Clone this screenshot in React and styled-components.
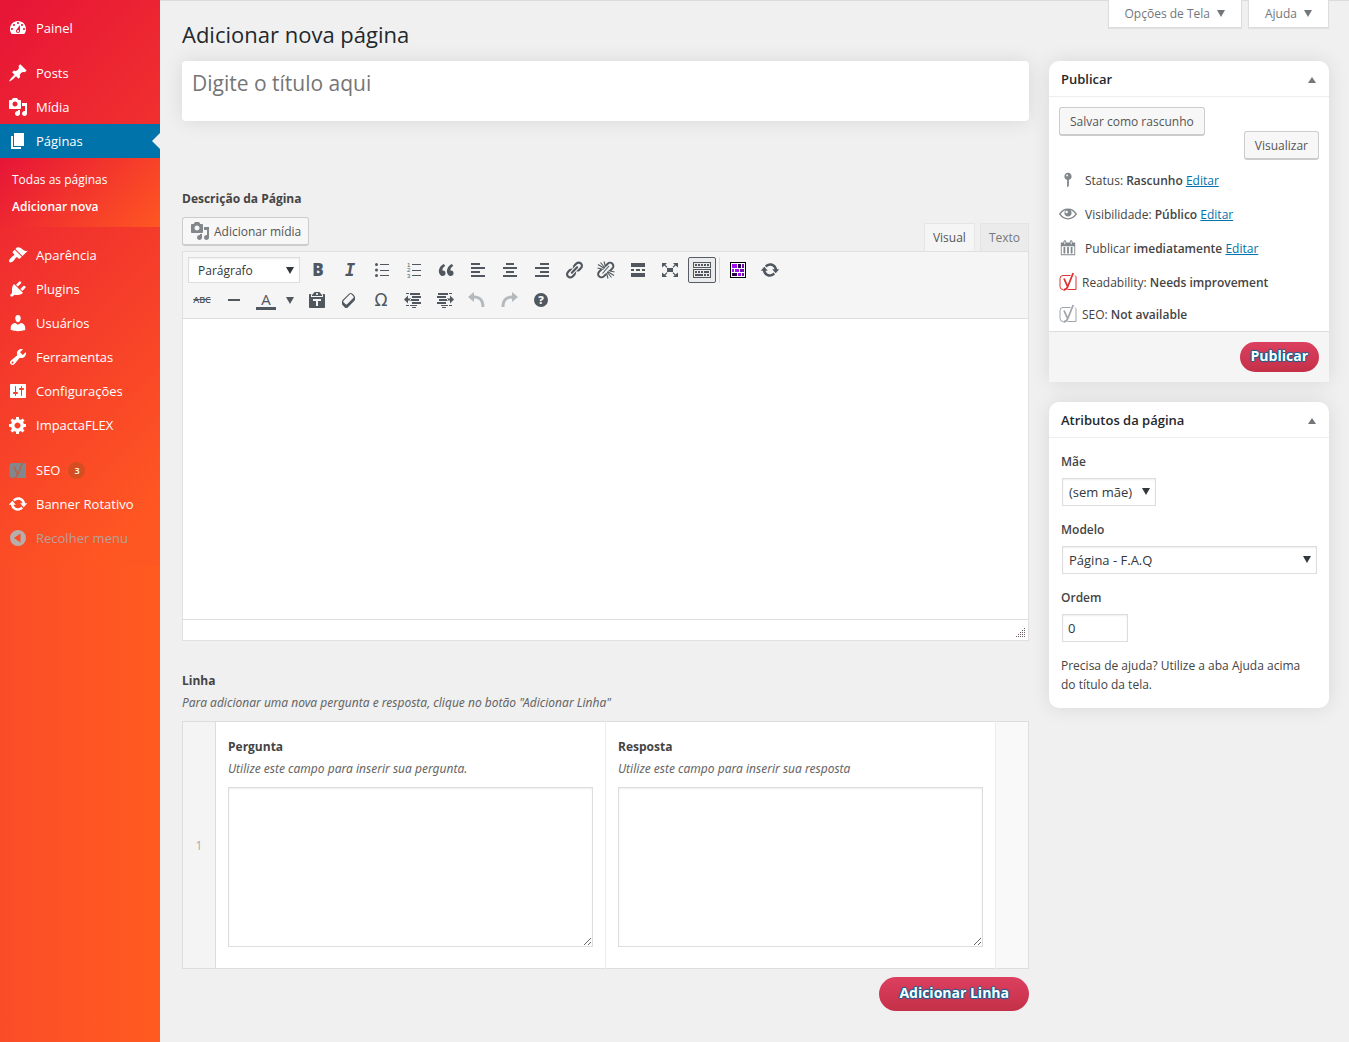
import React from "react";
import styled, { createGlobalStyle } from "styled-components";

const GlobalStyle = createGlobalStyle`
  *, *::before, *::after { box-sizing: border-box; }
  body {
    margin: 0;
    background: #f0f0f0;
    color: #444;
    font: 12px/19px "Open Sans", "Noto Sans", sans-serif;
  }
  button, input, select, textarea { font: inherit; color: inherit; margin: 0; }
  button { cursor: pointer; }
  h1, h2, p, ul { margin: 0; padding: 0; }
  ul { list-style: none; }
`;

/* ---------- icons ---------- */

const PATHS = {
  dashboard:
    "M3.76 16h12.48c1.1-1.37 1.76-3.11 1.76-5 0-4.42-3.58-8-8-8s-8 3.58-8 8c0 1.89.66 3.63 1.76 5zM10 4c.55 0 1 .45 1 1s-.45 1-1 1-1-.45-1-1 .45-1 1-1zM6 6c.55 0 1 .45 1 1s-.45 1-1 1-1-.45-1-1 .45-1 1-1zm8 0c.55 0 1 .45 1 1s-.45 1-1 1-1-.45-1-1 .45-1 1-1zm-5.37 5.55L12 7v6c0 1.1-.9 2-2 2s-2-.9-2-2c0-.57.24-1.08.63-1.45zM4 10c.55 0 1 .45 1 1s-.45 1-1 1-1-.45-1-1 .45-1 1-1zm12 0c.55 0 1 .45 1 1s-.45 1-1 1-1-.45-1-1 .45-1 1-1zm-5 3c0-.55-.45-1-1-1s-1 .45-1 1 .45 1 1 1 1-.45 1-1z",
  pin: "M10.44 3.02l1.82-1.82 6.36 6.35-1.83 1.82c-1.05-.68-2.48-.57-3.41.36l-.75.75c-.92.93-1.04 2.35-.35 3.41l-1.83 1.82-2.41-2.41-2.8 2.79c-.42.42-3.38 2.71-3.8 2.29s1.86-3.39 2.28-3.81l2.79-2.79L4.1 9.36l1.83-1.82c1.05.69 2.48.57 3.4-.36l.75-.75c.93-.92 1.05-2.35.36-3.41z",
  media:
    "M13 11V4c0-.55-.45-1-1-1h-1.67L9 1H5L3.67 3H2c-.55 0-1 .45-1 1v7c0 .55.45 1 1 1h10c.55 0 1-.45 1-1zM7 4.5c1.38 0 2.5 1.12 2.5 2.5S8.38 9.5 7 9.5 4.5 8.38 4.5 7 5.62 4.5 7 4.5zM14 6h5v10.5c0 1.38-1.12 2.5-2.5 2.5S14 17.88 14 16.5s1.12-2.5 2.5-2.5c.17 0 .34.02.5.05V9h-3V6zm-4 8.05V13h2v3.5c0 1.38-1.12 2.5-2.5 2.5S7 17.88 7 16.5 8.12 14 9.5 14c.17 0 .34.02.5.05z",
  page: "M6 15V2h10v13H6zm-1 1h8v2H3V5h2v11z",
  appearance:
    "M14.48 11.06L7.41 3.99l1.5-1.5c.5-.56 2.3-.47 3.51.32 1.21.8 1.43 1.28 2.91 2.1 1.18.64 2.45 1.26 4.45.85zm-.71.71L6.7 4.7 4.93 6.47c-.39.39-.39 1.02 0 1.41l1.06 1.06c.39.39.39 1.03 0 1.42-.6.6-1.43 1.11-2.21 1.69-.35.26-.7.53-1.01.84C1.43 14.23.4 16.08 1.4 17.07c.99 1 2.84-.03 4.18-1.36.31-.31.58-.66.85-1.02.57-.78 1.08-1.61 1.69-2.21.39-.39 1.02-.39 1.41 0l1.06 1.06c.39.39 1.02.39 1.41 0z",
  plugins:
    "M13.11 4.36L9.87 7.6 8 5.73l3.24-3.24c.35-.34 1.05-.2 1.56.32.52.51.66 1.21.31 1.55zm-8 1.77l.91-1.12 9.01 9.01-1.19.84c-.71.71-2.63 1.16-3.82 1.16H6.14L4.9 17.26c-.59.59-1.54.59-2.12 0-.59-.58-.59-1.53 0-2.12l1.24-1.24v-3.88c0-1.13.4-3.19 1.09-3.89zm7.26 3.97l3.24-3.24c.34-.35 1.04-.21 1.55.31.52.51.66 1.21.31 1.55l-3.24 3.25z",
  users:
    "M10 9.25c-2.27 0-2.73-3.44-2.73-3.44C7 4.02 7.82 2 9.97 2c2.16 0 2.98 2.02 2.71 3.81 0 0-.41 3.44-2.68 3.44zm0 2.57L12.72 10c2.39 0 4.52 2.33 4.52 4.53v2.49s-3.65 1.13-7.24 1.13c-3.65 0-7.24-1.13-7.24-1.13v-2.49c0-2.25 1.94-4.48 4.47-4.48z",
  tools:
    "M16.68 9.77c-1.34 1.34-3.3 1.67-4.95.99l-5.41 6.52c-.99.99-2.59.99-3.58 0s-.99-2.59 0-3.57l6.52-5.42c-.68-1.65-.35-3.61.99-4.95 1.28-1.28 3.12-1.62 4.72-1.06l-2.89 2.89 2.82 2.82 2.86-2.87c.53 1.58.18 3.39-1.08 4.65zM3.81 16.21c.4.39 1.04.39 1.43 0 .4-.4.4-1.04 0-1.43-.39-.4-1.03-.4-1.43 0-.39.39-.39 1.03 0 1.43z",
  settings:
    "M18 16V4c0-.55-.45-1-1-1H3c-.55 0-1 .45-1 1v12c0 .55.45 1 1 1h14c.55 0 1-.45 1-1zM8 11h1c.55 0 1 .45 1 1s-.45 1-1 1H8v1.5c0 .28-.22.5-.5.5s-.5-.22-.5-.5V13H6c-.55 0-1-.45-1-1s.45-1 1-1h1V5.5c0-.28.22-.5.5-.5s.5.22.5.5V11zm5-2h-1c-.55 0-1-.45-1-1s.45-1 1-1h1V5.5c0-.28.22-.5.5-.5s.5.22.5.5V7h1c.55 0 1 .45 1 1s-.45 1-1 1h-1v5.5c0 .28-.22.5-.5.5s-.5-.22-.5-.5V9z",
  generic:
    "M18 12h-2.18c-.17.7-.44 1.35-.81 1.93l1.54 1.54-2.1 2.1-1.54-1.54c-.58.36-1.23.63-1.91.79V19H8v-2.18c-.68-.16-1.33-.43-1.91-.79l-1.54 1.54-2.12-2.12 1.54-1.54c-.36-.58-.63-1.23-.79-1.91H1V9.03h2.17c.16-.7.44-1.35.8-1.94L2.43 5.55l2.1-2.1 1.54 1.54c.58-.37 1.24-.64 1.93-.81V2h3v2.18c.68.16 1.33.43 1.91.79l1.54-1.54 2.12 2.12-1.54 1.54c.36.59.64 1.24.8 1.94H18V12zm-8.5 1.5c1.66 0 3-1.34 3-3s-1.34-3-3-3-3 1.34-3 3 1.34 3 3 3z",
  update:
    "M10.2 3.28c3.53 0 6.43 2.61 6.92 6h2.08l-3.5 4-3.5-4h2.32c-.45-1.97-2.21-3.45-4.32-3.45-1.45 0-2.73.71-3.54 1.78L4.95 5.66C6.23 4.2 8.11 3.28 10.2 3.28zm-.4 13.44c-3.52 0-6.43-2.61-6.92-6H.8l3.5-4c1.17 1.33 2.33 2.67 3.5 4H5.48c.45 1.97 2.21 3.45 4.32 3.45 1.45 0 2.73-.71 3.54-1.78l1.71 1.95c-1.28 1.46-3.15 2.38-5.25 2.38z",
  collapse:
    "M10 2a8 8 0 1 0 0 16 8 8 0 0 0 0-16zM12.5 5.5v9L6 10z",
  quote:
    "M9.49 13.22c0-.74-.2-1.38-.61-1.9-.62-.78-1.83-.88-2.53-.72-.29-1.65 1.11-3.75 2.92-4.65L7.88 4c-2.73 1.3-5.42 4.28-4.96 8.05C3.21 14.43 4.59 16 6.54 16c.85 0 1.56-.25 2.12-.75s.83-1.18.83-2.03zm8.05 0c0-.74-.2-1.38-.61-1.9-.63-.78-1.83-.88-2.53-.72-.29-1.65 1.11-3.75 2.92-4.65L15.93 4c-2.73 1.3-5.41 4.28-4.95 8.05.29 2.38 1.66 3.95 3.61 3.95.85 0 1.56-.25 2.12-.75s.83-1.18.83-2.03z",
  bullets:
    "M4.500 3a1.500 1.500 0 1 0 0 3 1.500 1.500 0 0 0 0-3zM8 4h9v1H8zM4.500 8.500a1.500 1.500 0 1 0 0 3 1.500 1.500 0 0 0 0-3zM8 10h9v1H8zM4.500 14a1.500 1.500 0 1 0 0 3 1.500 1.500 0 0 0 0-3zM8 15h9v1H8z",
  alignLeft: "M12 5V3H3v2h9zm5 4V7H3v2h14zm-5 4v-2H3v2h9zm5 4v-2H3v2h14z",
  alignCenter: "M14 5V3H6v2h8zm3 4V7H3v2h14zm-3 4v-2H6v2h8zm3 4v-2H3v2h14z",
  alignRight: "M17 5V3H8v2h9zm0 4V7H3v2h14zm0 4v-2H8v2h9zm0 4v-2H3v2h14z",
  link: "M17.74 2.76c1.68 1.69 1.68 4.41 0 6.1l-1.53 1.52c-1.12 1.12-2.7 1.47-4.14 1.09l2.62-2.61.76-.77.76-.76c.84-.84.84-2.2 0-3.04-.84-.85-2.2-.85-3.04 0l-.77.76-3.38 3.38c-.37-1.44-.02-3.02 1.1-4.14l1.52-1.53c1.69-1.68 4.42-1.68 6.1 0zM8.59 13.43l5.34-5.34c.42-.42.42-1.1 0-1.52-.44-.43-1.13-.39-1.53 0l-5.33 5.34c-.42.42-.42 1.1 0 1.52.44.43 1.13.39 1.52 0zm-.76 2.29l4.14-4.15c.38 1.44.03 3.02-1.09 4.14l-1.52 1.53c-1.69 1.68-4.41 1.68-6.1 0-1.68-1.68-1.68-4.42 0-6.1l1.53-1.52c1.12-1.12 2.7-1.47 4.14-1.1l-4.14 4.15c-.85.84-.85 2.2 0 3.05.84.84 2.2.84 3.04 0z",
  more: "M17 7V3H3v4h14zM6 11V9H3v2h3zm6 0V9H8v2h4zm5 0V9h-3v2h3zm0 6v-4H3v4h14z",
  fullscreen:
    "M7 8h6v4H7zM2 3h5L5.300 4.700 7.500 6.900 6.600 7.800 4.400 5.600 2 7.500zM18 3h-5l1.700 1.700-2.200 2.200.9.9 2.200-2.200L18 7.500zM2 17h5l-1.700-1.700 2.200-2.200-.9-.9-2.200 2.200L2 12.500zM18 17h-5l1.700-1.700-2.200-2.200.9-.9 2.200 2.200L18 12.500z",
  kitchensink:
    "M19 2v6H1V2h18zm-1 5V3H2v4h16zM5 4v2H3V4h2zm3 0v2H6V4h2zm3 0v2H9V4h2zm3 0v2h-2V4h2zm3 0v2h-2V4h2zm2 5v9H1V9h18zm-1 8v-7H2v7h16zM5 11v2H3v-2h2zm3 0v2H6v-2h2zm3 0v2H9v-2h2zm6 0v2h-5v-2h5zm-6 3v2H3v-2h8zm3 0v2h-2v-2h2zm3 0v2h-2v-2h2z",
  paste:
    "M12.38 2L15 5v1H5V5l2.64-3h4.74zM10 5c.55 0 1-.44 1-1 0-.55-.45-1-1-1s-1 .45-1 1c0 .56.45 1 1 1zm5.45-1H17c.55 0 1 .45 1 1v12c0 .56-.45 1-1 1H3c-.55 0-1-.44-1-1V5c0-.55.45-1 1-1h1.550L4 4.630V7h12V4.630zM14 11V9H6v2h3v5h2v-5h3z",
  eraser:
    "M14.29 4.59l1.1 1.11c.41.4.61.94.61 1.47v2.12c0 .53-.2 1.07-.61 1.47l-6.63 6.63c-.4.41-.94.61-1.47.61s-1.07-.2-1.47-.61l-1.11-1.1-1.1-1.11c-.41-.4-.61-.94-.61-1.47v-2.12c0-.54.2-1.07.61-1.48l6.63-6.62c.4-.41.94-.61 1.470-.61s1.060.2 1.470.61zm-6.210 9.7l6.420-6.420c.39-.39.39-1.030 0-1.430L12.360 4.300c-.19-.19-.45-.29-.72-.29s-.52.1-.71.29l-6.420 6.420c-.39.4-.39 1.040 0 1.430l2.140 2.140c.38.38 1.040.38 1.430 0z",
  outdent:
    "M7 3h10v2H7zM9 6h9v2H9zM7 9h9v2H7zM9 12h9v2H9zM7 15h7v1H7zM9 17h4v1H9zM3 3h3v1H3zM3 15h3v1H3zM5 5.500V8.500H8v2H5v3L1 9.500z",
  indent:
    "M3 3h10v2H3zM2 6h9v2H2zM4 9h9v2H4zM2 12h9v2H2zM6 15h7v1H6zM7 17h4v1H7zM14 3h3v1h-3zM14 15h3v1h-3zM15 5.500V8.500H12v2h3v3l4-4z",
  undo: "M1 7l6-5v3.500c6 0 10.500 3.500 10.500 11.500h-3C14.500 11 12 8.500 7 8.500V12z",
  redo: "M19 7l-6-5v3.500C7 5.500 2.500 9 2.500 17h3C5.500 11 8 8.500 13 8.500V12z",
  status:
    "M14 6c0 1.86-1.28 3.41-3 3.86V16c0 1-2 2-2 2V9.86c-1.72-.45-3-2-3-3.86 0-2.21 1.79-4 4-4s4 1.790 4 4zM8 5c0 .55.45 1 1 1s1-.45 1-1-.45-1-1-1-1 .45-1 1z",
  eye: "M19.7 9.4C17.7 6 14 3.900 10 3.900S2.300 6 .3 9.400L0 10l.3.6c2 3.400 5.700 5.500 9.700 5.500s7.700-2.100 9.700-5.500l.3-.6-.3-.6zM10 14.600c-3.300 0-6.300-1.700-8.100-4.600C3.200 8 5 6.500 7.200 5.800 6.400 6.600 6 7.700 6 8.900c0 2.200 1.800 4 4 4s4-1.800 4-4c0-1.200-.4-2.300-1.200-3.100C15 6.500 16.800 8 18.100 10c-1.800 2.900-4.800 4.600-8.100 4.600zM8.500 6.500c.8 0 1.400.6 1.400 1.400s-.6 1.400-1.400 1.400-1.400-.6-1.400-1.400.6-1.400 1.400-1.400z",
  calendar:
    "M15 4h3v14H2V4h3V3c0-.83.67-1.500 1.500-1.500S8 2.170 8 3v1h4V3c0-.83.67-1.500 1.500-1.500S15 2.170 15 3v1zM6 3v2.500c0 .28.22.5.5.5s.5-.22.5-.5V3c0-.28-.22-.5-.5-.5S6 2.720 6 3zm7 0v2.500c0 .28.22.5.5.5s.5-.22.5-.5V3c0-.28-.22-.5-.5-.5s-.5.22-.5.5zm4 14V8H3v9h14zM7 16V9H5v7h2zm4 0V9H9v7h2zm4 0V9h-2v7h2z",
};

const Svg = styled.svg`
  flex: none;
  display: block;
  fill: currentColor;
  color: ${(p) => p.$color || "inherit"};
`;

const Icon = ({ name, size = 20, color }) => (
  <Svg width={size} height={size} viewBox="0 0 20 20" $color={color} aria-hidden="true">
    <path d={PATHS[name]} fillRule="evenodd" />
  </Svg>
);

const UnlinkIcon = () => (
  <Svg width="20" height="20" viewBox="0 0 20 20" aria-hidden="true">
    <g fill="none" stroke="currentColor">
      <path strokeWidth="2" d="M9.500 6l2.200-2.300a3.300 3.300 0 0 1 4.700 4.700l-2.600 2.600M10.200 14l-2.400 2.400a3.300 3.300 0 0 1-4.700-4.700l2.500-2.500" />
      <path strokeWidth="1.100" d="M2 4.500l6.500 4M4.500 2.500L9 8M8 1.500L9.500 7M1.500 8l6 1.500M18 15.500l-6.500-4M15.500 17.500L11 12M12 18.500L10.500 13M18.500 12l-6-1.500M13 6l-6.500 7.500" />
    </g>
  </Svg>
);

const NumberedIcon = () => (
  <Svg width="20" height="20" viewBox="0 0 20 20" aria-hidden="true">
    <path d="M8 4h9v1H8zM8 10h9v1H8zM8 15h9v1H8z" />
    <g fontFamily="Liberation Sans, sans-serif" fontSize="6">
      <text x="3" y="7">1</text>
      <text x="3" y="12">2</text>
      <text x="3" y="18">3</text>
    </g>
  </Svg>
);

const HelpIcon = () => (
  <Svg width="20" height="20" viewBox="0 0 20 20" aria-hidden="true">
    <circle cx="10" cy="10" r="7" />
    <text x="10" y="14" textAnchor="middle" fill="#f5f5f5" fontFamily="Open Sans, sans-serif" fontWeight="800" fontSize="11">?</text>
  </Svg>
);

const MosaicIcon = () => (
  <Svg width="16" height="16" viewBox="0 0 16 16" aria-hidden="true">
    <path fill="#000" d="M0 0h16v16H0z" />
    <path fill="#fff" d="M1 1h14v14H1z" />
    <path fill="#a010f0" d="M2 2h5v4H2zM2 7h2v3H2zM5 7h4v3H5zM8 11h3v3H8z" />
    <path fill="#2c0050" d="M8 2h3v4H8zM2 11h5v3H2z" />
    <path fill="#6a10b0" d="M12 2h2v4h-2zM10 7h4v3h-4zM12 11h2v3h-2z" />
  </Svg>
);

const YoastIcon = ({ color, solid }) => (
  <Svg
    width={solid ? 20 : 18}
    height="20"
    viewBox={solid ? "-1 0 20 20" : "0 0 18 20"}
    $color={color}
    aria-hidden="true"
  >
    {solid ? (
      <path d="M3.500 3H12.500L17 3.500V18H3.500A3 3 0 0 1 .5 15V6A3 3 0 0 1 3.500 3z" />
    ) : (
      <path fill="none" stroke="currentColor" d="M11.500 3.500H4A3 3 0 0 0 1 6.500v8a3 3 0 0 0 3 3M16 3.500q1 .5 1 2V17.500H8.500" />
    )}
    <path
      fill="none"
      stroke={solid ? "#b8604a" : "currentColor"}
      strokeWidth={solid ? 1.500 : 1.800}
      d="M5 6.500l3.300 7.500M14.200 1L8.800 14.500Q7.500 18 4.500 18"
    />
  </Svg>
);

/* ---------- sidebar ---------- */

const Page = styled.div`
  display: grid;
  grid-template-columns: 160px minmax(0, 1fr);
  min-height: 100vh;
  box-shadow: inset 0 1px 0 #dcdcdc;
`;

const Sidebar = styled.nav`
  background: linear-gradient(90deg, #fb4c28, #ff5722 70%, #ff5a20);
  color: #fff;
`;

const Menu = styled.ul`
  padding: 11px 0;
  background: linear-gradient(135deg, #e61437, #ff5722 92%);
`;

const MenuItem = styled.li`
  margin-top: ${(p) => (p.$spaced ? "11px" : "0")};
`;

const MenuLink = styled.a`
  position: relative;
  display: flex;
  align-items: center;
  gap: 8px;
  height: 34px;
  padding-left: 8px;
  font-size: 13px;
  text-decoration: none;
  color: ${(p) => (p.$muted ? "#b8a09a" : "#fff")};
  background: ${(p) => (p.$current ? "#0073aa" : "none")};
  &::after {
    content: "";
    display: ${(p) => (p.$current ? "block" : "none")};
    position: absolute;
    right: 0;
    top: 9px;
    border: 8px solid transparent;
    border-left: 0;
    border-right-color: #f0f0f0;
  }
`;

const Submenu = styled.ul`
  padding: 8px 0 7px;
  background: linear-gradient(135deg, #e61437, #ff5722);
`;

const SubmenuLink = styled.a`
  display: block;
  padding-left: 12px;
  line-height: 27px;
  color: #fff;
  text-decoration: none;
  font-weight: ${(p) => (p.$current ? 600 : 400)};
`;

const Badge = styled.span`
  width: 17px;
  border-radius: 9px;
  background: #d54e21;
  font-size: 9px;
  font-weight: 600;
  line-height: 17px;
  text-align: center;
`;

const MENU = [
  { icon: "dashboard", label: "Painel" },
  { icon: "pin", label: "Posts", spaced: true },
  { icon: "media", label: "Mídia" },
  { icon: "page", label: "Páginas", current: true, children: ["Todas as páginas", "Adicionar nova"] },
  { icon: "appearance", label: "Aparência", spaced: true },
  { icon: "plugins", label: "Plugins" },
  { icon: "users", label: "Usuários" },
  { icon: "tools", label: "Ferramentas" },
  { icon: "settings", label: "Configurações" },
  { icon: "generic", label: "ImpactaFLEX" },
  { icon: "yoast", label: "SEO", badge: 3, spaced: true },
  { icon: "update", label: "Banner Rotativo" },
  { icon: "collapse", label: "Recolher menu", muted: true },
];

/* ---------- page frame ---------- */

const Content = styled.main`
  padding: 0 20px 31px 22px;
`;

const TopBar = styled.header`
  display: flex;
  justify-content: space-between;
  align-items: flex-start;
  height: 61px;
`;

const Title = styled.h1`
  padding-top: 19px;
  font-size: 22px;
  font-weight: 400;
  line-height: 30px;
  color: #23282d;
`;

const ScreenTabs = styled.div`
  display: flex;
  gap: 6px;
`;

const ScreenTab = styled.button`
  display: flex;
  align-items: center;
  gap: 7px;
  height: 28px;
  padding: 0 16px;
  border: 1px solid #ddd;
  border-top: 0;
  background: #fff;
  color: #72777c;
  box-shadow: 0 1px 1px rgba(0, 0, 0, 0.06);
`;

const Caret = styled.span`
  border: ${(p) => p.$size || 4}px solid transparent;
  ${(p) => (p.$up ? "border-top: 0; border-bottom" : "border-bottom: 0; border-top")}: ${(p) => p.$height || 7}px solid currentColor;
`;

const Columns = styled.div`
  display: grid;
  grid-template-columns: minmax(0, 1fr) 280px;
  gap: 20px;
  align-items: start;
`;

const TitleInput = styled.input`
  display: block;
  width: 100%;
  height: 60px;
  padding: 0 10px 17px;
  border: 0;
  border-radius: 4px;
  background: #fff;
  box-shadow: 0 0 20px rgba(0, 0, 0, 0.1);
  font-size: 21px;
  &::placeholder { color: #757575; opacity: 1; }
`;

const Section = styled.section`
  margin-top: ${(p) => p.$top}px;
`;

const FieldLabel = styled.label`
  display: block;
  font-weight: 700;
  line-height: 20px;
`;

const Hint = styled.p`
  padding: 1px 0;
  font-family: "Noto Sans", "Open Sans", sans-serif;
  font-style: italic;
  line-height: 22px;
  color: #666;
`;

/* ---------- editor ---------- */

const GrayButton = styled.button`
  display: inline-flex;
  align-items: center;
  gap: 4px;
  height: 29px;
  padding: 0 ${(p) => (p.$icon ? "7px" : "10px")};
  border: 1px solid #ccc;
  border-bottom-width: 2px;
  border-radius: 3px;
  background: #f7f7f7;
  color: #555;
`;

const EditorTop = styled.div`
  display: flex;
  justify-content: space-between;
  align-items: flex-start;
  padding-top: 8px;
`;

const ModeTabs = styled.div`
  display: flex;
  gap: 5px;
  padding-top: 6px;
`;

const ModeTab = styled.button`
  height: 28px;
  padding: 0 8px;
  border: 1px solid #e5e5e5;
  border-bottom: 0;
  background: ${(p) => (p.$active ? "#f5f5f5" : "#ebebeb")};
  color: ${(p) => (p.$active ? "#555" : "#777")};
`;

const EditorBox = styled.div`
  border: 1px solid #e0e0e0;
  background: #fff;
`;

const Toolbar = styled.div`
  padding: 3px;
  border-bottom: 1px solid #ddd;
  background: #f5f5f5;
`;

const ToolRow = styled.div`
  display: flex;
  align-items: center;
  gap: 4px;
  height: 30px;
  padding-left: 2px;
`;

const ToolGroup = styled.div`
  display: flex;
  gap: 4px;
  padding-left: 4px;
  border-left: 1px solid #ddd;
  margin-left: -1px;
`;

const ToolButton = styled.button`
  display: flex;
  align-items: center;
  justify-content: center;
  width: ${(p) => p.$width || 28}px;
  height: 26px;
  padding: 0;
  border: 1px solid ${(p) => (p.$active ? "#555d66" : "transparent")};
  border-radius: 2px;
  background: ${(p) => (p.$active ? "#ebebeb" : "none")};
  color: ${(p) => (p.$faded ? "#b4b9be" : "#50575e")};
`;

const Split = styled.div`
  display: flex;
`;

const Glyph = styled.span`
  font-family: ${(p) => p.$family || "inherit"};
  font-size: ${(p) => p.$size}px;
  font-weight: ${(p) => p.$weight || 400};
  font-style: ${(p) => p.$style || "normal"};
  text-decoration: ${(p) => (p.$strike ? "line-through" : "none")};
  line-height: 16px;
  border-bottom: ${(p) => (p.$bar ? "3px solid" : "0")};
  padding: 0 ${(p) => (p.$bar ? "5px" : "0")};
`;

const SelectWrap = styled.div`
  position: relative;
  width: ${(p) => p.$width};
  color: #32373c;
`;

const SelectCaret = styled(Caret)`
  position: absolute;
  right: 6px;
  top: 10px;
  pointer-events: none;
`;

const SelectBox = styled.select`
  appearance: none;
  display: block;
  width: 100%;
  height: ${(p) => p.$height || 28}px;
  padding: 0 20px 0 ${(p) => p.$indent || 6}px;
  border: 1px solid #ddd;
  border-radius: 0;
  background: #fff;
  box-shadow: inset 0 1px 2px rgba(0, 0, 0, 0.07);
  font-size: ${(p) => p.$font || 13}px;
`;

const EditorArea = styled.textarea`
  display: block;
  width: 100%;
  height: 300px;
  padding: 10px;
  border: 0;
  resize: none;
  outline: none;
`;

const StatusBar = styled.div`
  display: flex;
  justify-content: flex-end;
  align-items: flex-end;
  height: 21px;
  padding: 2px;
  border-top: 1px solid #ddd;
`;

/* ---------- repeater ---------- */

const Repeater = styled.table`
  width: 100%;
  border-collapse: collapse;
  table-layout: fixed;
  background: #fff;
  border: 1px solid #ddd;
`;

const SideCell = styled.td`
  width: 33px;
  padding: 0;
  border: 1px solid #ddd;
  background: ${(p) => p.$bg};
  color: #aaa;
  text-align: center;
`;

const FieldCell = styled.td`
  padding: 15px 12px 21px;
  border: 1px solid #ededed;
  border-width: 0 1px 0 0;
  vertical-align: top;
`;

const Answer = styled.textarea`
  display: block;
  width: 100%;
  height: 160px;
  margin-top: 6px;
  padding: 6px;
  border: 1px solid #ddd;
  background: #fff;
  box-shadow: inset 0 1px 2px rgba(0, 0, 0, 0.07);
  resize: vertical;
`;

const Actions = styled.div`
  display: flex;
  justify-content: flex-end;
  padding-top: 8px;
`;

const PinkButton = styled.button`
  height: ${(p) => p.$height}px;
  padding: 0 ${(p) => p.$pad}px 3px;
  border: 0;
  border-radius: 17px;
  background: linear-gradient(#dc4060, #c43048);
  color: #fff;
  font-size: 14px;
  font-weight: 700;
  text-shadow: 0 -1px 1px #006799, 1px 0 1px #006799, 0 1px 1px #006799, -1px 0 1px #006799;
`;

/* ---------- side boxes ---------- */

const SideColumn = styled.aside`
  display: grid;
  gap: 20px;
`;

const Card = styled.section`
  border-radius: ${(p) => (p.$footer ? "10px 10px 0 0" : "10px")};
  background: #fff;
  box-shadow: 0 0 20px rgba(0, 0, 0, 0.1);
`;

const CardHeader = styled.div`
  display: flex;
  justify-content: space-between;
  align-items: center;
  height: 36px;
  padding: 2px 13px 0 12px;
  border-bottom: 1px solid #eee;
  color: #72777c;
`;

const CardTitle = styled.h2`
  font-size: 13px;
  font-weight: 600;
  color: #23282d;
`;

const DraftActions = styled.div`
  display: grid;
  grid-template-columns: auto auto;
  justify-content: space-between;
  padding: 10px 10px 0;
  & > :last-child { margin-top: 24px; }
`;

const Info = styled.ul`
  padding: 3px 10px 2px;
`;

const InfoRow = styled.li`
  display: flex;
  align-items: center;
  gap: ${(p) => (p.$tight ? 5 : 8)}px;
  height: ${(p) => (p.$short ? 30 : 34)}px;
  white-space: nowrap;
  strong { font-weight: 600; }
  a { color: #0073aa; }
`;

const CardFooter = styled.div`
  display: flex;
  justify-content: flex-end;
  padding: 10px;
  border-top: 1px solid #ddd;
  background: #f5f5f5;
`;

const Attributes = styled.div`
  padding: 14px 12px;
`;

const Field = styled.div`
  padding: 0 0 14px 1px;
`;

const AttrLabel = styled.label`
  display: block;
  margin: 0 0 7px -1px;
  font-weight: 600;
`;

const OrderInput = styled.input`
  display: block;
  width: 66px;
  height: 28px;
  padding: 0 5px;
  border: 1px solid #ddd;
  background: #fff;
  box-shadow: inset 0 1px 2px rgba(0, 0, 0, 0.07);
  font-size: 13px;
  color: #32373c;
`;

const Tool = ({ label, icon, children, ...rest }) => (
  <ToolButton type="button" aria-label={label} title={label} {...rest}>
    {icon ? <Icon name={icon} /> : children}
  </ToolButton>
);

function SideMenu() {
  return (
    <Sidebar aria-label="Menu principal">
      <Menu>
        {MENU.map((item) => (
          <MenuItem key={item.label} $spaced={item.spaced}>
            <MenuLink href="#" $current={item.current} $muted={item.muted}>
              {item.icon === "yoast" ? (
                <YoastIcon color="#82878c" solid />
              ) : (
                <Icon name={item.icon} color={item.muted ? "#b5aeab" : "#fff"} />
              )}
              {item.label}
              {item.badge && <Badge>{item.badge}</Badge>}
            </MenuLink>
            {item.children && (
              <Submenu>
                {item.children.map((child, i) => (
                  <li key={child}>
                    <SubmenuLink href="#" $current={i === 1}>{child}</SubmenuLink>
                  </li>
                ))}
              </Submenu>
            )}
          </MenuItem>
        ))}
      </Menu>
    </Sidebar>
  );
}

function Editor() {
  return (
    <Section $top={68}>
      <FieldLabel htmlFor="descricao">Descrição da Página</FieldLabel>
      <EditorTop>
        <GrayButton type="button" $icon>
          <Icon name="media" color="#82878c" />
          Adicionar mídia
        </GrayButton>
        <ModeTabs>
          <ModeTab type="button" $active>Visual</ModeTab>
          <ModeTab type="button">Texto</ModeTab>
        </ModeTabs>
      </EditorTop>
      <EditorBox>
        <Toolbar>
          <ToolRow>
            <SelectWrap $width="112px">
              <SelectBox aria-label="Formato" $height={26} $indent={9} $font={12} defaultValue="p">
                <option value="p">Parágrafo</option>
              </SelectBox>
              <SelectCaret />
            </SelectWrap>
            <Tool label="Negrito"><Glyph $size={17} $weight={800}>B</Glyph></Tool>
            <Tool label="Itálico"><Glyph $size={17} $weight={700} $style="italic" $family="DejaVu Sans Mono, monospace">I</Glyph></Tool>
            <Tool label="Lista com marcadores" icon="bullets" />
            <Tool label="Lista numerada"><NumberedIcon /></Tool>
            <Tool label="Citação" icon="quote" />
            <Tool label="Alinhar à esquerda" icon="alignLeft" />
            <Tool label="Centralizar" icon="alignCenter" />
            <Tool label="Alinhar à direita" icon="alignRight" />
            <Tool label="Inserir link" icon="link" />
            <Tool label="Remover link"><UnlinkIcon /></Tool>
            <Tool label="Leia mais" icon="more" />
            <Tool label="Tela cheia" icon="fullscreen" />
            <Tool label="Alternar barra" icon="kitchensink" $active />
            <ToolGroup>
              <Tool label="Mosaico"><MosaicIcon /></Tool>
              <Tool label="Banner" icon="update" />
            </ToolGroup>
          </ToolRow>
          <ToolRow>
            <Tool label="Tachado"><Glyph $size={9} $weight={600} $strike>ABC</Glyph></Tool>
            <Tool label="Linha horizontal"><Svg width="20" height="20" viewBox="0 0 20 20"><path d="M4 9h12v2H4z" /></Svg></Tool>
            <Split>
              <Tool label="Cor do texto"><Glyph $size={15} $bar>A</Glyph></Tool>
              <Tool label="Escolher cor" $width={19}><Caret /></Tool>
            </Split>
            <Tool label="Colar como texto" icon="paste" />
            <Tool label="Limpar formatação" icon="eraser" />
            <Tool label="Caractere especial"><Glyph $size={17} $family="DejaVu Sans, sans-serif">Ω</Glyph></Tool>
            <Tool label="Diminuir recuo" icon="outdent" />
            <Tool label="Aumentar recuo" icon="indent" />
            <Tool label="Desfazer" icon="undo" $faded />
            <Tool label="Refazer" icon="redo" $faded />
            <Tool label="Atalhos do teclado"><HelpIcon /></Tool>
          </ToolRow>
        </Toolbar>
        <EditorArea id="descricao" />
        <StatusBar>
          <Svg width="10" height="10" viewBox="0 0 10 10" $color="#72606a" aria-hidden="true">
            <path d="M8 0h1v1H8zM8 2h1v1H8zM6 2h1v1H6zM8 4h1v1H8zM6 4h1v1H6zM4 4h1v1H4zM8 6h1v1H8zM6 6h1v1H6zM4 6h1v1H4zM2 6h1v1H2zM8 8h1v1H8zM6 8h1v1H6zM4 8h1v1H4zM2 8h1v1H2zM0 8h1v1H0z" />
          </Svg>
        </StatusBar>
      </EditorBox>
    </Section>
  );
}

function Rows() {
  return (
    <Section $top={30}>
      <FieldLabel as="div">Linha</FieldLabel>
      <Hint>Para adicionar uma nova pergunta e resposta, clique no botão "Adicionar Linha"</Hint>
      <Section $top={6}>
        <Repeater>
          <tbody>
            <tr>
              <SideCell $bg="#f4f4f4">1</SideCell>
              <FieldCell>
                <FieldLabel htmlFor="pergunta">Pergunta</FieldLabel>
                <Hint>Utilize este campo para inserir sua pergunta.</Hint>
                <Answer id="pergunta" />
              </FieldCell>
              <FieldCell>
                <FieldLabel htmlFor="resposta">Resposta</FieldLabel>
                <Hint>Utilize este campo para inserir sua resposta</Hint>
                <Answer id="resposta" />
              </FieldCell>
              <SideCell $bg="#f9f9f9" />
            </tr>
          </tbody>
        </Repeater>
        <Actions>
          <PinkButton type="button" $height={34} $pad={20}>Adicionar Linha</PinkButton>
        </Actions>
      </Section>
    </Section>
  );
}

function PublishCard() {
  return (
    <Card $footer>
      <CardHeader>
        <CardTitle>Publicar</CardTitle>
        <Caret $up $height={6} />
      </CardHeader>
      <DraftActions>
        <GrayButton type="button">Salvar como rascunho</GrayButton>
        <GrayButton type="button">Visualizar</GrayButton>
      </DraftActions>
      <Info>
        <InfoRow><Icon name="status" size={18} color="#82878c" /><span>Status: <strong>Rascunho</strong> <a href="#">Editar</a></span></InfoRow>
        <InfoRow><Icon name="eye" size={18} color="#82878c" /><span>Visibilidade: <strong>Público</strong> <a href="#">Editar</a></span></InfoRow>
        <InfoRow><Icon name="calendar" size={18} color="#82878c" /><span>Publicar <strong>imediatamente</strong> <a href="#">Editar</a></span></InfoRow>
        <InfoRow $tight><YoastIcon color="#dc3232" /><span>Readability: <strong>Needs improvement</strong></span></InfoRow>
        <InfoRow $tight $short><YoastIcon color="#a0a5aa" /><span>SEO: <strong>Not available</strong></span></InfoRow>
      </Info>
      <CardFooter>
        <PinkButton type="button" $height={30} $pad={11}>Publicar</PinkButton>
      </CardFooter>
    </Card>
  );
}

function AttributesCard() {
  return (
    <Card>
      <CardHeader>
        <CardTitle>Atributos da página</CardTitle>
        <Caret $up $height={6} />
      </CardHeader>
      <Attributes>
        <Field>
          <AttrLabel htmlFor="mae">Mãe</AttrLabel>
          <SelectWrap $width="94px">
            <SelectBox id="mae"><option>(sem mãe)</option></SelectBox>
            <SelectCaret />
          </SelectWrap>
        </Field>
        <Field>
          <AttrLabel htmlFor="modelo">Modelo</AttrLabel>
          <SelectWrap $width="100%">
            <SelectBox id="modelo"><option>Página - F.A.Q</option></SelectBox>
            <SelectCaret />
          </SelectWrap>
        </Field>
        <Field>
          <AttrLabel htmlFor="ordem">Ordem</AttrLabel>
          <OrderInput id="ordem" type="text" defaultValue="0" />
        </Field>
        <p>Precisa de ajuda? Utilize a aba Ajuda acima do título da tela.</p>
      </Attributes>
    </Card>
  );
}

export default function App() {
  return (
    <>
      <GlobalStyle />
      <Page>
        <SideMenu />
        <Content>
          <TopBar>
            <Title>Adicionar nova página</Title>
            <ScreenTabs>
              <ScreenTab type="button">Opções de Tela <Caret /></ScreenTab>
              <ScreenTab type="button">Ajuda <Caret /></ScreenTab>
            </ScreenTabs>
          </TopBar>
          <Columns>
            <div>
              <TitleInput aria-label="Título" placeholder="Digite o título aqui" />
              <Editor />
              <Rows />
            </div>
            <SideColumn>
              <PublishCard />
              <AttributesCard />
            </SideColumn>
          </Columns>
        </Content>
      </Page>
    </>
  );
}
